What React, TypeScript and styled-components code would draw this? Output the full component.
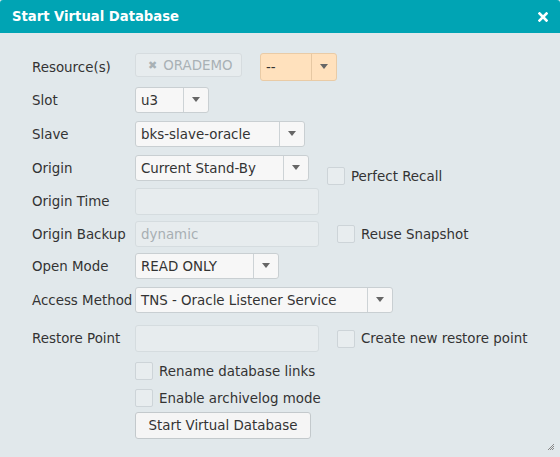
import styled, { createGlobalStyle, css } from 'styled-components'

const GlobalStyle = createGlobalStyle`
  html, body {
    margin: 0;
    padding: 0;
    background: #e1e8eb;
  }
  body {
    font-family: 'DejaVu Sans', Verdana, sans-serif;
    font-size: 13.4px;
    color: #333;
  }
`

const Dialog = styled.div`
  display: flex;
  flex-direction: column;
  width: 560px;
  height: 457px;
  background: #e1e8eb;
  position: relative;
`

const Header = styled.div`
  display: flex;
  align-items: center;
  justify-content: space-between;
  height: 33px;
  padding: 0 12px;
  background: #00a4b4;
  border-radius: 3px 3px 0 0;
  color: #fff;
`

const Title = styled.h1`
  margin: 0;
  font-size: 13.2px;
  font-weight: bold;
`

const Close = styled.button`
  display: flex;
  align-items: center;
  justify-content: center;
  width: 16px;
  height: 16px;
  padding: 0;
  margin-right: -3px;
  border: none;
  background: none;
  cursor: pointer;
`

const Form = styled.div`
  display: flex;
  flex-direction: column;
  padding: 20px 0 0 32px;
`

const Row = styled.div<{ $mt?: number; $h?: number }>`
  display: flex;
  align-items: center;
  height: ${({ $h }) => $h ?? 26}px;
  margin-top: ${({ $mt }) => $mt ?? 0}px;
`

const Label = styled.label`
  flex: 0 0 103px;
  white-space: nowrap;
`

const Select = styled.div<{ $width: number; $warn?: boolean }>`
  display: flex;
  align-items: stretch;
  box-sizing: border-box;
  width: ${({ $width }) => $width}px;
  height: 100%;
  border: 1px solid #c9cfd2;
  border-radius: 3px;
  background: #f7f7f7;

  ${({ $warn }) =>
    $warn &&
    css`
      background: #ffe1bd;
      border-color: #e9cba6;
      margin-left: 18px;
    `}
`

const SelectValue = styled.span`
  flex: 1;
  display: flex;
  align-items: center;
  padding-left: 5px;
  white-space: nowrap;
  overflow: hidden;
`

const Arrow = styled.span<{ $warn?: boolean }>`
  flex: 0 0 24px;
  display: flex;
  align-items: center;
  justify-content: center;
  border-left: 1px solid ${({ $warn }) => ($warn ? '#e6c8a3' : '#cdd3d6')};

  &::after {
    content: '';
    border-left: 4px solid transparent;
    border-right: 4px solid transparent;
    border-top: 5px solid #666;
    margin-top: -1px;
  }
`

const Tag = styled.div`
  display: flex;
  align-items: center;
  gap: 6px;
  box-sizing: border-box;
  width: 107px;
  height: 24px;
  align-self: flex-start;
  padding-left: 12px;
  border: 1px solid #d6dcdf;
  border-radius: 3px;
  background: #e7ecee;
  color: #a9b1b5;
`

const TagX = styled.span`
  font-size: 11px;
  font-weight: bold;
`

const Input = styled.div<{ $width?: number }>`
  display: flex;
  align-items: center;
  box-sizing: border-box;
  width: ${({ $width }) => $width ?? 184}px;
  height: 100%;
  padding-left: 5px;
  border: 1px solid #d5dcdf;
  border-radius: 3px;
  background: #e7ecee;
  color: #a7afb3;
`

const Check = styled.label<{ $ml?: number; $drop?: number }>`
  display: flex;
  align-items: center;
  gap: 6px;
  margin-left: ${({ $ml }) => $ml ?? 18}px;
  white-space: nowrap;
  ${({ $drop }) =>
    $drop &&
    css`
      align-self: flex-end;
      margin-bottom: -${$drop}px;
    `}
`

const Box = styled.span`
  display: inline-block;
  box-sizing: border-box;
  width: 18px;
  height: 18px;
  border: 1px solid #cdd4d8;
  border-radius: 2px;
  background: #e8edef;
`

const Button = styled.button`
  box-sizing: border-box;
  width: 176px;
  height: 100%;
  border: 1px solid #c3c9cc;
  border-radius: 3px;
  background: #f5f5f5;
  font-family: inherit;
  font-size: 13.4px;
  color: #333;
  padding: 0;
`

const Indent = styled.div`
  display: flex;
  align-items: center;
  height: 100%;
  margin-left: 103px;
`

const Grip = styled.svg`
  position: absolute;
  right: 5px;
  bottom: 6px;
`

const DropSelect = ({ width, value, warn }: { width: number; value: string; warn?: boolean }) => (
  <Select $width={width} $warn={warn}>
    <SelectValue>{value}</SelectValue>
    <Arrow $warn={warn} />
  </Select>
)

const Checkbox = ({ text, ml, drop }: { text: string; ml?: number; drop?: number }) => (
  <Check $ml={ml} $drop={drop}>
    <Box />
    {text}
  </Check>
)

export default function App() {
  return (
    <Dialog>
      <GlobalStyle />
      <Header>
        <Title>Start Virtual Database</Title>
        <Close aria-label="close">
          <svg width="10" height="10" viewBox="0 0 10 10">
            <path d="M1.5 1.5 L8.5 8.5 M8.5 1.5 L1.5 8.5" stroke="#fff" strokeWidth="2.6" strokeLinecap="square" />
          </svg>
        </Close>
      </Header>
      <Form>
        <Row $h={28}>
          <Label>Resource(s)</Label>
          <Tag>
            <TagX>✖</TagX>ORADEMO
          </Tag>
          <Select $width={77} $warn>
            <SelectValue>--</SelectValue>
            <Arrow $warn />
          </Select>
        </Row>
        <Row $mt={6}>
          <Label>Slot</Label>
          <DropSelect width={74} value="u3" />
        </Row>
        <Row $mt={8}>
          <Label>Slave</Label>
          <DropSelect width={170} value="bks-slave-oracle" />
        </Row>
        <Row $mt={8}>
          <Label>Origin</Label>
          <DropSelect width={174} value="Current Stand-By" />
          <Checkbox text="Perfect Recall" ml={18} drop={4} />
        </Row>
        <Row $mt={7} $h={27}>
          <Label>Origin Time</Label>
          <Input />
        </Row>
        <Row $mt={6}>
          <Label>Origin Backup</Label>
          <Input>dynamic</Input>
          <Checkbox text="Reuse Snapshot" />
        </Row>
        <Row $mt={6}>
          <Label>Open Mode</Label>
          <DropSelect width={144} value="READ ONLY" />
        </Row>
        <Row $mt={8}>
          <Label>Access Method</Label>
          <DropSelect width={258} value="TNS - Oracle Listener Service" />
        </Row>
        <Row $mt={12} $h={27}>
          <Label>Restore Point</Label>
          <Input />
          <Checkbox text="Create new restore point" />
        </Row>
        <Row $mt={10} $h={18}>
          <Indent>
            <Checkbox text="Rename database links" ml={0} />
          </Indent>
        </Row>
        <Row $mt={9} $h={18}>
          <Indent>
            <Checkbox text="Enable archivelog mode" ml={0} />
          </Indent>
        </Row>
        <Row $mt={5} $h={27}>
          <Indent>
            <Button>Start Virtual Database</Button>
          </Indent>
        </Row>
      </Form>
      <Grip width="8" height="8" viewBox="0 0 8 8">
        <path d="M7 1 L1 7 M7 3 L3 7 M7 5 L5 7" stroke="#888" strokeWidth="1" />
      </Grip>
    </Dialog>
  )
}
